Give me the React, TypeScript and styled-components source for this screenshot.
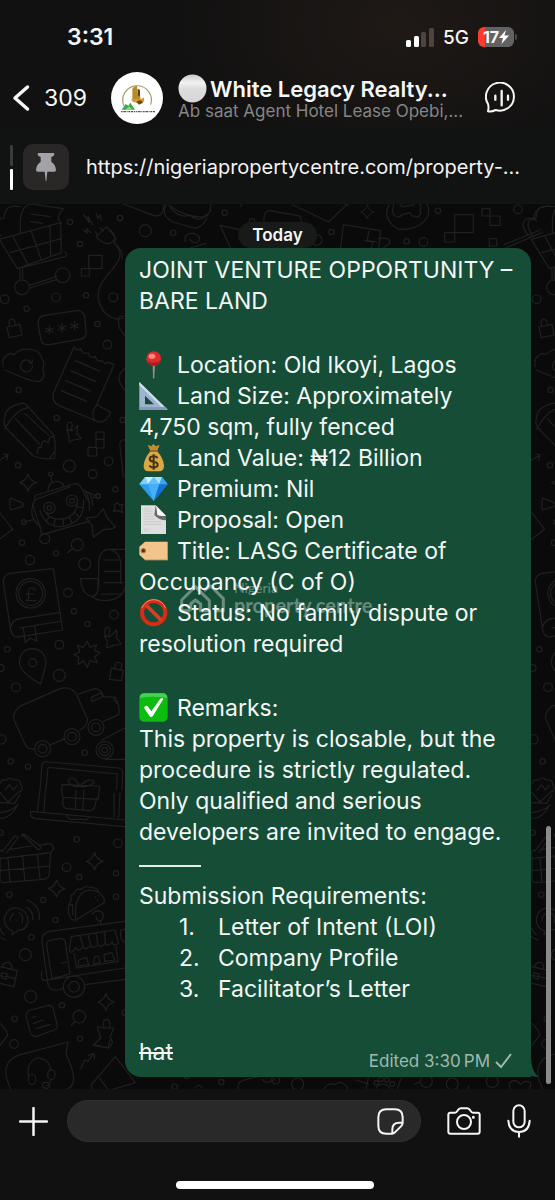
import React from "react";
import styled, { createGlobalStyle } from "styled-components";

const Global = createGlobalStyle`
  * { box-sizing: border-box; }
  html, body, #root { min-height: 100vh; }
  body { margin: 0; background: #0a0a0a; color: #f4f6f5; font-family: Inter, "Liberation Sans", sans-serif; }
  button { border: 0; padding: 0; background: none; color: inherit; font: inherit; display: flex; flex: none; align-items: center; cursor: pointer; }
  svg { display: block; flex: none; }
`;

const Screen = styled.div`
  min-height: 100vh;
  display: flex;
  flex-direction: column;
`;

const Top = styled.header`
  background: radial-gradient(ellipse 230px 150px at 72% 20%, #1f1916, #111111);
`;

const StatusBar = styled.div`
  height: 72px;
  padding: 2px 41px 0 67px;
  display: flex;
  align-items: center;
  justify-content: space-between;
`;

const Clock = styled.time`
  font-size: 23px;
  font-weight: 600;
`;

const StatusIcons = styled.div`
  display: flex;
  align-items: center;
  gap: 9px;
  font-size: 19px;
  font-weight: 500;
`;

const Battery = styled.span`
  position: relative;
  width: 36px;
  height: 20px;
  border-radius: 6px;
  display: flex;
  align-items: center;
  justify-content: center;
  background: linear-gradient(90deg, #ff3b30 7px, #626262 7px);
  font-size: 16px;
  font-weight: 700;
  &::after {
    content: "";
    position: absolute;
    right: -3px;
    top: 7px;
    width: 2px;
    height: 6px;
    border-radius: 0 2px 2px 0;
    background: #4a4a4a;
  }
`;

const ChatHeader = styled.div`
  height: 57px;
  padding: 0 38px 6px 12px;
  display: flex;
  align-items: center;
`;

const BackButton = styled.button`
  gap: 14px;
  width: 99px;
  font-size: 23px;
`;

const Names = styled.div`
  flex: 1;
  min-width: 0;
  margin: 0 20px 0 15px;
`;

const Title = styled.h1`
  margin: 0;
  height: 26px;
  display: flex;
  align-items: center;
  gap: 3px;
  font-size: 22px;
  line-height: 26px;
  font-weight: 600;
  white-space: nowrap;
`;

const Subtitle = styled.p`
  margin: 0;
  font-size: 17px;
  line-height: 18px;
  color: #858585;
  white-space: nowrap;
`;

const Pinned = styled.div`
  height: 75px;
  padding: 2px 20px 0 10px;
  display: flex;
  align-items: center;
  background: #111212;
  border-bottom: 1px solid #131313;
`;

const PinSteps = styled.div`
  display: grid;
  gap: 3px;
  margin-right: 10px;
`;

const PinStep = styled.span<{ $on?: boolean }>`
  width: 3px;
  height: 21px;
  border-radius: 1px;
  background: ${(p) => (p.$on ? "#ffffff" : "#3a3c3c")};
`;

const PinTile = styled.span`
  flex: none;
  width: 46px;
  height: 46px;
  border-radius: 10px;
  background: #292827;
  display: grid;
  place-items: center;
  margin-right: 17px;
`;

const PinLink = styled.a`
  min-width: 0;
  color: #f4f4f4;
  text-decoration: none;
  font-size: 20px;
  line-height: 28px;
  white-space: nowrap;
`;

const Chat = styled.main`
  position: relative;
  flex: 1;
  overflow: hidden;
  padding: 18px 24px 12px 125px;
  background: #0a0a0a;
`;

const Wallpaper = styled.svg`
  position: absolute;
  inset: 0;
  width: 100%;
  height: 100%;
`;

const DayRow = styled.div`
  position: relative;
  display: flex;
  justify-content: center;
  margin-left: -101px;
`;

const Day = styled.span`
  padding: 0 14px;
  border-radius: 13px;
  background: #171a19;
  font-size: 17px;
  line-height: 26px;
  font-weight: 600;
`;

const Bubble = styled.article`
  position: relative;
  padding: 7px 13px 6px 14px;
  border-radius: 16px 16px 0 16px;
  background: #154d37;
  font-size: 23px;
  line-height: 31px;
`;

const Tail = styled.svg`
  position: absolute;
  right: -8px;
  bottom: 0;
`;

const Block = styled.div<{ $gap?: number }>`
  margin-bottom: ${(p) => p.$gap ?? 33}px;
`;

const Line = styled.p`
  margin: 0;
`;

const Emoji = styled.svg`
  display: inline-block;
  width: 29px;
  height: 29px;
  margin: -2px 9px 0 0;
  vertical-align: -6px;
`;

const Rule = styled.hr`
  width: 62px;
  height: 33px;
  margin: 0;
  border: 0;
  background: linear-gradient(#e6ece9, #e6ece9) 0 17px / 100% 2px no-repeat;
`;

const Steps = styled.ol`
  list-style: none;
  margin: 0;
  padding: 0 0 0 40px;
`;

const Step = styled.li`
  display: grid;
  grid-template-columns: 39px 1fr;
`;

const LastRow = styled.div`
  min-height: 34px;
  display: flex;
  justify-content: space-between;
`;

const Meta = styled.span`
  align-self: flex-end;
  display: flex;
  align-items: center;
  gap: 5px;
  margin-right: 6px;
  font-size: 17px;
  line-height: 20px;
  color: #a1b8af;
`;

const Watermark = styled.div`
  position: absolute;
  left: 55px;
  top: 332px;
  display: flex;
  align-items: flex-end;
  gap: 9px;
  opacity: 0.36;
  font-family: Lato, sans-serif;
  font-size: 20px;
  font-weight: 700;
  line-height: 18px;
`;

const WatermarkSmall = styled.span`
  display: block;
  font-size: 14px;
  font-weight: 400;
  line-height: 16px;
`;

const Scrollbar = styled.span`
  position: absolute;
  right: 4px;
  bottom: 5px;
  width: 5px;
  height: 258px;
  border-radius: 3px;
  background: #8b8b8b;
`;

const Composer = styled.footer`
  padding: 11px 24px 11px 19px;
  background: #111111;
`;

const ComposerRow = styled.div`
  display: flex;
  align-items: center;
`;

const Field = styled.div`
  flex: 1;
  min-width: 0;
  height: 42px;
  margin: 0 26px 0 19px;
  padding: 0 16px;
  display: flex;
  align-items: center;
  border-radius: 22px;
  border: 1px solid #303030;
  background: #292929;
`;

const TextInput = styled.input`
  flex: 1;
  min-width: 0;
  height: 100%;
  border: 0;
  outline: 0;
  background: none;
  color: inherit;
  font: inherit;
  font-size: 21px;
`;

const MicButton = styled.button`
  margin-left: 26px;
`;

const HomeBar = styled.div`
  width: 198px;
  height: 8px;
  margin: 39px auto 0;
  border-radius: 4px;
  background: #ffffff;
`;

const outline = { fill: "none", stroke: "#f5f5f5", strokeLinecap: "round", strokeLinejoin: "round" } as const;

const Circles = ({ at }: { at: number[][] }) => (
  <>
    {at.map(([x, y, r], i) => (
      <circle key={i} cx={x} cy={y} r={r} />
    ))}
  </>
);

const lock = "M20 381L60 373L66 405L28 413ZM28 378C22 350 44 350 46 375";
const sparkle = "M0-26Q4-6 25 0Q4 6 0 26Q-6 6-25 0Q-6-6 0-26Z";

const Doodles = () => (
  <Wallpaper aria-hidden="true">
    <g id="doodles" fill="none" stroke="#202020" strokeWidth="3.6" strokeLinejoin="round" strokeLinecap="round">
      <g transform="translate(0 -4) scale(.33333)">
        <path d="M-2 118L182 68L184 158L52 206ZM-2 118L52 206L196 170Q206 160 194 156M30 158L184 116M38 108L84 194M94 94L124 180M150 78L152 166M60 208V240M68 206V240M88 256L170 230M90 264L172 238M2 108Q-30 60 12 54Q14 10 60 20M62 100Q54 14 96 12L190 26Q164 54 184 70M92 42L150 50M92 64L128 70" />
        <path d="M288 110L320 80L346 114Q326 150 288 110ZM286 96L294 106M300 84L310 92M344 130C400 190 290 220 294 290C300 340 340 366 370 354M252 44L268 68L264 50L278 74M288 40L294 56L300 44L304 60M250 90L262 100L260 86L272 98" />
        <path d={lock} />
        <path d="M266 166H306V206H266ZM244 206H268V228H244ZM288 696H312V744H288ZM288 718H312M264 742H290V768H264Z" />
        <path d="M134 346L230 332Q250 330 254 350L258 396Q258 416 238 418L148 434Q126 436 122 416L114 370Q114 348 134 346ZM148 376V402M136 384L160 396M136 396L160 384M186 370V396M174 378L198 390M174 390L198 378M224 364V390M212 372L236 384M212 384L236 372" />
        <path d="M10 500C0 470 30 456 42 464C60 440 120 440 126 478Q136 484 128 506Q140 534 118 544Q100 548 14 510M92 484A18 18 0 1 0 98 498M98 480L96 490L86 486" />
        <path d="M222 440L160 580Q154 604 176 616L296 666Q320 668 332 636L290 614L342 494L324 486Q318 498 306 482Q292 488 286 470Q268 476 264 458Q248 466 242 446Q230 456 222 440ZM290 614Q270 640 284 662M226 482L300 514M212 512L286 544M198 542L272 574M184 572L260 604" />
        <path d="M14 652Q16 620 64 610Q76 608 84 620L160 704Q168 716 164 774Q140 782 100 768L18 684Q8 672 14 652ZM14 688Q44 630 86 622M46 656L118 732M74 640L146 706M112 762Q112 738 124 742Q124 712 146 728Q146 704 160 712M150 774L164 754" />
        <path d="M200 690L218 692L234 676L230 700L244 716L220 720L208 726L206 706ZM204 690Q196 668 212 666Q222 672 212 690M-4 782L22 766M10 762L24 764L20 780" />
        <path d={sparkle} transform="translate(84 848)" />
        <path d="M104 900Q100 884 120 882L220 852Q236 848 244 864L262 900M144 874Q144 846 170 844Q190 846 192 860M152 828L156 846M262 876L290 888M370 350Q350 340 358 384L374 406M374 506Q340 530 374 570M374 720Q356 718 360 740L370 830" />
        <Circles at={[[66, 262, 22], [188, 226, 22], [210, 66, 8], [240, 132, 8], [360, 54, 8], [168, 292, 13], [258, 286, 8], [340, 292, 13], [14, 298, 13], [80, 326, 8], [292, 372, 8], [322, 434, 13], [56, 570, 8], [170, 654, 8], [368, 660, 8], [326, 784, 13], [278, 822, 13], [208, 798, 18], [54, 796, 8], [346, 868, 8], [152, 822, 6], [294, 888, 7]]} />
      </g>
      <g transform="translate(0 286) scale(.33333)">
        <path d="M32 24L66 38Q74 44 66 50L32 60Q26 44 32 24ZM-2 66L38 118L-2 148M98 40L126 134L268 94M104 30L210-10M252 0Q270 20 268 60M260 4Q276 10 278 46M278 22H290M72 96L104 88M104 30Q80 80 122 110M120 62Q140 120 196 108Q256 92 250 30M138 68Q150 92 196 86Q230 74 232 40M140 92L148 80M162 104L166 86M190 108V88M216 100L208 82M238 82L224 68M250 54L234 50" />
        <path d="M310 56L322 84L346 110Q340 120 312 118L280 142L276 106L258 84L290 80ZM342 46L352 38L360 46L370 42L364 54L368 68L354 62L340 64L346 54Z" />
        <path d="M202 188L218 176M296 290V216Q300 176 332 178H380M332 178Q362 190 362 220V280M242 266H294V300Q290 318 276 320Q244 310 242 266M276 320Q300 338 340 328Q370 320 376 290M312 210H362M312 244H362M312 278H370M304 312H366" />
        <path d="M160 236L28 250Q10 256 10 276L32 420Q38 446 60 440L188 420L160 236M32 412Q36 390 60 386L178 368M58 414L180 394M70 414L76 458L90 444L110 454L104 408M106 300Q96 288 86 298V326Q82 330 78 332H108M78 312H102" />
        <path d="M122 582Q58 546 58 516Q62 476 98 476Q138 480 138 522ZM262 454L270 472L290 464L284 482L300 488L284 500L292 518L270 512L262 532L250 512L234 524L236 502L222 494L240 486L232 466L250 472ZM312 438L330 440L350 420L350 444L364 462L340 466L320 474L322 452ZM316 436Q310 410 326 412Q332 420 326 436M334 534L370 542L364 572L328 568ZM342 534Q350 506 366 524L362 540" />
        <path d="M104 776Q80 780 74 760L42 690Q36 668 58 650L180 596Q210 588 228 610L262 686Q264 708 240 720M152 764L196 746M236 612L284 596Q306 598 310 620L346 622Q362 654 356 674L310 694M274 622L300 610Q316 618 300 624L276 634ZM340 626L350 640M306 750L390 706M316 808H380" />
        <path d="M120 900L126 824Q130 812 146 816L356 834Q368 836 368 850L366 900M138 900L144 832L352 852L350 900M240 890Q206 890 206 872Q216 850 240 888Q270 860 282 874Q280 890 240 890M186 900V884L298 888V900M2 880Q0 868 20 870Q28 858 42 870Q62 866 62 884Q72 896 60 906M16 900L28 884L40 900L52 886" />
        <Circles at={[[148, 54, 17], [148, 54, 7], [216, 32, 17], [216, 32, 7], [294, 18, 7], [72, 96, 7], [134, 146, 15], [66, 158, 8], [168, 190, 8], [232, 164, 18], [90, 210, 14], [254, 222, 18], [204, 308, 13], [222, 364, 8], [342, 374, 13], [262, 402, 8], [92, 310, 44], [92, 310, 36], [22, 478, 8], [178, 464, 13], [98, 518, 12], [2, 534, 10], [178, 556, 18], [48, 592, 13], [4, 748, 14], [128, 776, 24], [128, 776, 13], [216, 740, 24], [216, 740, 13], [288, 712, 24], [288, 712, 13], [314, 780, 26], [314, 780, 17], [314, 780, 8], [254, 788, 8], [32, 814, 8], [84, 830, 8]]} />
      </g>
      <g transform="translate(0 586) scale(.33333)">
        <path d="M120 0L112 62M136 0L132 64M342 10V80M360 8L356 82M92 64L376 90M92 64Q88 82 106 86L374 110M200 76Q204 88 216 88H250Q262 92 266 82M190 24L188 40Q190 56 204 56L268 62Q284 60 286 44L290 26M184 0L188 22L294 28L298 0M228 0L226 58M252 0L248 60M0 8L24 36L58 4M0 38L44 40L60 14M52 46Q30 90-2 84M0 68Q36 64 54 44" />
        <path d="M0 206L152 188L148 254Q142 268 128 268L10 278Q-2 278 0 250ZM0 206Q-8 180 8 180M6 186L42 140Q50 134 54 144L20 188M30 178L96 168M66 132L116 180Q124 176 120 168L76 134Q66 130 66 140M120 166L148 160Q162 166 160 178L152 188M24 204L30 276M68 198L74 270M112 194L120 266M0 242L150 228" />
        <path d={sparkle} transform="translate(284 214)" />
        <path d={sparkle} transform="translate(170 296)" />
        <path d={sparkle} transform="translate(318 636)" />
        <path d="M228 390Q212 394 206 370Q202 340 214 332Q208 314 224 310Q226 294 244 298Q254 286 266 292Q290 290 298 308Q318 326 312 338ZM228 390Q220 330 250 306Q270 294 298 308M208 346L218 344V374M286 320L287 322M296 316L297 318M292 330L293 332M276 372Q290 356 308 368Q314 384 302 392Q290 394 288 380M302 392V404" />
        <path d="M36 434L38 424Q8 410 14 382Q22 352 52 354Q86 362 84 396Q78 422 56 420ZM30 392Q30 378 42 370M56 368Q74 378 66 398M48 390L50 391M80 352Q102 366 98 390M80 330Q122 346 118 388M-2 440Q6 446 18 450M0 414Q2 426 14 434" />
        <path d="M374 394L148 424Q122 432 126 458L144 584Q148 602 170 600L190 596M256 584L374 568M130 572L374 534M126 544Q118 570 134 570M140 466Q138 452 154 450L180 446Q194 444 196 458L210 552L156 566ZM184 520L200 516M214 440L344 420L356 458Q342 472 336 456Q322 474 316 460Q300 476 294 464Q278 480 272 466Q256 484 250 470Q234 490 228 472Q210 498 208 478ZM240 438L250 470M264 434L272 466M288 430L294 464M314 426L316 460M222 490L230 534L354 514L348 470M236 510L260 502L266 524L234 528ZM284 500L296 498L300 518L280 522ZM312 494L336 488L344 510L314 514ZM374 418L362 420Q358 450 374 456" />
        <path d="M0 530L52 542L42 590L0 580M6 530Q14 514 28 518Q38 524 34 536M0 556L48 566M6 548L22 552L18 568L4 564ZM92 660L146 646Q158 646 160 658L172 706Q172 716 162 720L108 740Q96 740 92 730L78 680Q78 664 92 660ZM98 682L106 680M100 700L130 690M108 716L150 704M214 706L226 694M0 700Q30 730 20 740L0 766M292 710L310 714L342 714L330 740L338 756L328 774L280 766L302 744ZM312 712Q304 688 322 688Q334 694 328 714" />
        <path d="M32 896Q-6 820 54 796L204 756L198 792Q240 880 204 896M86 862Q76 820 110 804Q150 806 152 842M152 870Q150 886 138 888M242 836L254 810L264 814L280 792M264 796L282 790L284 806M346 800L406 878L324 902M346 800L274 884L278 900M300 866L326 902" />
        <ellipse cx="96" cy="868" rx="11" ry="16" />
        <ellipse cx="154" cy="854" rx="11" ry="15" />
        <ellipse cx="138" cy="886" rx="11" ry="9" />
        <Circles at={[[2, 128, 8], [230, 148, 8], [354, 160, 13], [200, 232, 13], [348, 250, 8], [238, 262, 8], [348, 320, 8], [28, 314, 8], [130, 330, 8], [166, 390, 8], [94, 442, 8], [76, 494, 18], [222, 590, 32], [222, 590, 16], [92, 620, 18], [186, 646, 8], [44, 686, 8], [238, 680, 19], [374, 668, 8], [42, 762, 13], [240, 746, 8]]} />
      </g>
      <g transform="translate(110 -4) scale(.33333)">
        <path d="M40 12L130 46Q160 56 162 12M170 12Q150 50 190 66L250 84Q276 86 290 54M176 16Q240 60 292 48M182 24Q210 56 240 46Q270 70 288 44M302 12Q304 40 288 46M226 124Q220 98 250 100Q280 110 262 128Q244 130 240 116M240 144L288 130M330 76L386 88M330 76L362 144M462 64Q460 30 480 32L560 46Q576 48 574 66M548 14L656 66L712 12M700 10L716 18M392 20L396 10M700 74L812 92L806 144M700 74L692 144M776 94L772 122L800 126M764 122L788 126L784 146M806 116Q840 110 840 130L820 144" />
        <path d={sparkle} transform="translate(772 36) scale(.8)" />
        <path d="M838 14C814 50 850 90 880 88C930 88 972 50 950 12M850 22C840 46 866 60 876 44L900 38C912 60 940 50 930 30C940 14 920 0 908 16L876 20C870 4 846 4 850 22ZM1034 44H1090V98H1034ZM1004 98H1034V126H1004ZM1116 26H1140V48H1116ZM1140 48H1170V76H1140ZM1138 116H1160V138H1138ZM1182 134L1290 90M1186 144L1296 98M1258 110Q1230 80 1244 60Q1260 48 1280 62M1270 60Q1276 10 1334 20M0 90Q24 110 12 130Q40 150 36 176" />
        <Circles at={[[30, 54, 8], [106, 92, 18], [190, 98, 8], [344, 38, 8], [426, 64, 8], [664, 96, 8], [984, 32, 8], [890, 124, 8], [940, 126, 13], [1224, 28, 13], [620, 120, 16]]} />
      </g>
      <g transform="translate(0 836) scale(.33333)">
        <path d="M278 14L324 24L330 0M584 144Q596 128 606 144M714 146Q710 124 740 118L830 96M786 118Q800 136 824 118" />
        <Circles at={[[524, 140, 8], [664, 126, 8], [560, 108, 8]]} />
      </g>
      <g transform="translate(275 826) scale(.33333)">
        <path d="M146 178Q160 156 180 164Q196 150 210 164Q222 172 212 180M242 150L280 162M280 144L272 178M378 146L366 178M418 162L436 156M302 178Q310 158 334 164Q346 170 344 178M706 178Q696 154 718 152Q732 154 736 164Q750 148 766 158Q770 170 762 178M576 178L582 168" />
        <Circles at={[[68, 162, 18], [2, 150, 12], [304, 158, 7], [318, 148, 7], [336, 150, 7], [352, 162, 7], [454, 154, 18], [532, 162, 18], [652, 154, 18]]} />
      </g>
    </g>
    <use href="#doodles" x="532" />
    <use href="#doodles" x="1064" />
  </Wallpaper>
);

const PushpinEmoji = () => (
  <Emoji viewBox="0 0 87 87" aria-label="Pin" role="img">
    <path d="M41 44H48L46 84L44 87L42 84Z" fill="#9a8e86" />
    <circle cx="44" cy="26" r="22" fill="#dd2c2b" />
    <path d="M24 32Q30 48 46 47Q62 44 65 30Q50 46 24 32Z" fill="#b3191c" />
    <ellipse cx="39" cy="19" rx="10" ry="8" fill="#ff8a80" />
  </Emoji>
);
const RulerEmoji = () => (
  <Emoji viewBox="0 0 87 87" aria-label="Set square" role="img">
    <path fillRule="evenodd" d="M1 3L86 86H1ZM18 44V70H45Z" fill="#9fb3cf" />
    <path d="M1 3L86 86H76L1 13Z" fill="#cbdcee" />
    <path d="M1 78H80L86 86H1Z" fill="#8599ba" />
  </Emoji>
);
const MoneyEmoji = () => (
  <Emoji viewBox="0 0 87 87" aria-label="Money bag" role="img">
    <path d="M27 7L37 10L43 4L50 10L61 7L54 24Q74 46 75 68Q76 84 60 85H28Q13 84 14 68Q16 44 35 24Z" fill="#dba944" />
    <path d="M27 7L37 10L43 4L50 10L61 7L54 22H35Z" fill="#c08a2f" />
    <path d="M33 24H56" stroke="#8b572a" strokeWidth="5" strokeLinecap="round" />
    <path d="M56 45Q50 39 43 40Q32 41 32 48Q33 55 45 57Q57 59 56 67Q54 74 44 74Q36 74 31 68M44 34V80" fill="none" stroke="#463313" strokeWidth="6" />
  </Emoji>
);
const GemEmoji = () => (
  <Emoji viewBox="0 0 87 87" aria-label="Gem" role="img">
    <path d="M18 9H69L86 31L44 81L1 31Z" fill="#2b9df0" />
    <path d="M18 9L27 31H1Z" fill="#7fd0fa" />
    <path d="M18 9H44L27 31Z" fill="#c7efff" />
    <path d="M44 9L61 31H27Z" fill="#5fc1fb" />
    <path d="M44 9H69L61 31Z" fill="#a7e2fd" />
    <path d="M69 9L86 31H61Z" fill="#3aa7ef" />
    <path d="M27 31H61L44 81Z" fill="#47b1f7" />
    <path d="M61 31H86L44 81Z" fill="#1572cf" />
  </Emoji>
);
const PageEmoji = () => (
  <Emoji viewBox="0 0 87 87" aria-label="Page" role="img">
    <path d="M6 1H50L81 32V87H6Z" fill="#dedede" />
    <path d="M50 1L81 32V46Q60 46 46 30Z" fill="#6a6a6a" />
    <path d="M50 1L81 32Q66 34 55 30Q54 14 50 1Z" fill="#fafafa" />
    <path d="M14 12H34M14 18H42M14 26H40M14 34H44M14 42H48M14 50H70M14 58H68M14 72H30M14 78H26" stroke="#c4c4c4" strokeWidth="2" />
  </Emoji>
);
const TagEmoji = () => (
  <Emoji viewBox="0 0 87 87" aria-label="Label" role="img">
    <path d="M18 17H86V72H18L1 56V32Z" fill="#f3c58d" />
    <path d="M18 70H86V73H18Z" fill="#cf9e64" />
    <circle cx="13" cy="44" r="8" fill="#b9783f" />
    <circle cx="13" cy="44" r="5" fill="#43342a" />
  </Emoji>
);
const ProhibitedEmoji = () => (
  <Emoji viewBox="0 0 87 87" aria-label="Prohibited" role="img">
    <circle cx="44" cy="44" r="35" fill="none" stroke="#d92b12" strokeWidth="12" />
    <path d="M20 20L68 68" stroke="#e03a20" strokeWidth="11" />
    <path d="M8 31Q20 5 45 5Q70 6 80 31" fill="none" stroke="#ff8a6c" strokeWidth="3" />
  </Emoji>
);
const CheckEmoji = () => (
  <Emoji viewBox="0 0 87 87" aria-label="Done" role="img">
    <rect x="1" y="1" width="85" height="85" rx="14" fill="#0cbc10" />
    <path d="M2 15Q3 1 15 1H72Q84 1 85 15Q44 8 2 15Z" fill="#43d24b" />
    <path d="M15 44Q20 35 26 40L37 55L64 17Q70 12 73 18L42 68Q36 76 31 68Z" fill="#ffffff" />
  </Emoji>
);

const details = [
  { icon: <PushpinEmoji />, text: "Location: Old Ikoyi, Lagos" },
  { icon: <RulerEmoji />, text: "Land Size: Approximately 4,750 sqm, fully fenced" },
  { icon: <MoneyEmoji />, text: "Land Value: ₦12 Billion" },
  { icon: <GemEmoji />, text: "Premium: Nil" },
  { icon: <PageEmoji />, text: "Proposal: Open" },
  { icon: <TagEmoji />, text: "Title: LASG Certificate of Occupancy (C of O)" },
  { icon: <ProhibitedEmoji />, text: "Status: No family dispute or resolution required" },
];
const requirements = ["Letter of Intent (LOI)", "Company Profile", "Facilitator’s Letter"];

export default function App() {
  return (
    <Screen>
      <Global />
      <Top>
        <StatusBar>
          <Clock>3:31</Clock>
          <StatusIcons>
            <svg width="28" height="19" viewBox="0 0 28 19" fill="#fff" aria-label="Signal">
              <rect x="0" y="12" width="5" height="7" rx="1.5" />
              <rect x="8" y="8" width="5" height="11" rx="1.5" />
              <rect x="15" y="4" width="5" height="15" rx="1.5" fill="#4b4441" />
              <rect x="23" y="0" width="5" height="19" rx="1.5" fill="#4b4441" />
            </svg>
            <span>5G</span>
            <Battery>
              17
              <svg width="10" height="14" viewBox="0 0 10 14" fill="#fff" aria-label="Charging">
                <path d="M7 0L0 8H4L2.500 14L10 5.500H5.500Z" />
              </svg>
            </Battery>
          </StatusIcons>
        </StatusBar>
        <ChatHeader>
          <BackButton aria-label="Back, 309 unread chats">
            <svg width="18" height="28" viewBox="0 0 18 28" {...outline} strokeWidth="3.500">
              <path d="M15.500 3L3 14L15.500 25" />
            </svg>
            <span>309</span>
          </BackButton>
          <svg width="52" height="52" viewBox="0 0 156 156" role="img" aria-label="White Legacy Realty logo">
            <circle cx="78" cy="78" r="78" fill="#fff" />
            <path d="M39 102A43 43 0 1 1 119 98" fill="none" stroke="#a99b69" strokeWidth="3.500" />
            <path d="M68 46L78 41L80 68L88 74L88 82H64V50Z" fill="#b98a2c" />
            <path d="M80 50L87 54V74L80 70Z" fill="#5b4317" />
            <path d="M60 82L80 80Q92 84 98 76L100 88L90 94L66 90Z" fill="#d39a2c" />
            <path d="M76 90Q90 78 96 92L84 98Z" fill="#6b4818" />
            <path d="M32 113L44 96L52 101L58 92L72 113Z" fill="#3fa94b" />
            <path d="M44 113L54 103L64 113Z" fill="#8bdc73" />
            <path d="M30 119H132" stroke="#555" strokeWidth="4" strokeDasharray="5 2 8 2 3 2" />
          </svg>
          <Names>
            <Title>
              <svg width="29" height="29" viewBox="0 0 29 29" role="img" aria-label="White circle">
                <defs>
                  <linearGradient id="ball" x1="0" y1="0" x2="0" y2="1">
                    <stop offset="0" stopColor="#c9c9c9" />
                    <stop offset=".3" stopColor="#f2f2f2" />
                    <stop offset=".5" stopColor="#dddddd" />
                    <stop offset="1" stopColor="#d6d6d6" />
                  </linearGradient>
                </defs>
                <circle cx="14.500" cy="14.500" r="14" fill="url(#ball)" />
              </svg>
              White Legacy Realty...
            </Title>
            <Subtitle>Ab saat Agent Hotel Lease Opebi,...</Subtitle>
          </Names>
          <button aria-label="Voice chat">
            <svg width="32" height="32" viewBox="0 0 96 96" {...outline} strokeWidth="6">
              <path d="M9 88Q12 76 9 66A42 42 0 1 1 32 84Q20 90 9 88Z" />
              <path d="M31 41V53M50 27V70M69 41V53" strokeWidth="7" />
            </svg>
          </button>
        </ChatHeader>
      </Top>
      <Pinned>
        <PinSteps>
          <PinStep />
          <PinStep $on />
        </PinSteps>
        <PinTile>
          <svg width="20" height="28" viewBox="0 0 60 84" fill="#a3a2a8" role="img" aria-label="Pinned message">
            <path d="M8 0H52Q56 0 55 5Q54 9 46 12V27Q58 34 60 50Q60 56 55 56H34L31 84H29L26 56H5Q0 56 0 50Q2 34 14 27V12Q6 9 5 5Q4 0 8 0Z" />
          </svg>
        </PinTile>
        <PinLink href="#pinned">https://nigeriapropertycentre.com/property-...</PinLink>
      </Pinned>
      <Chat>
        <Doodles />
        <DayRow>
          <Day>Today</Day>
        </DayRow>
        <Bubble>
          <Tail width="24" height="22" viewBox="0 0 24 22" aria-hidden="true">
            <path d="M16 0Q16 17 24 22Q16 22 11 18Q7 22 0 22V0Z" fill="#154d37" />
          </Tail>
          <Block>
            <Line>JOINT VENTURE OPPORTUNITY – BARE LAND</Line>
          </Block>
          <Block>
            {details.map((d) => (
              <Line key={d.text}>
                {d.icon}
                {d.text}
              </Line>
            ))}
          </Block>
          <Block $gap={32}>
            <Line>
              <CheckEmoji />
              Remarks:
            </Line>
            <Line>
              This property is closable, but the procedure is strictly regulated. Only qualified and serious developers
              are invited to engage.
            </Line>
            <Rule />
            <Line>Submission Requirements:</Line>
            <Steps>
              {requirements.map((r, i) => (
                <Step key={r}>
                  <span>{i + 1}.</span>
                  <span>{r}</span>
                </Step>
              ))}
            </Steps>
          </Block>
          <LastRow>
            <s>hat</s>
            <Meta>
              Edited 3:30{"\u2009"}PM
              <svg width="17" height="16" viewBox="0 0 17 16" fill="none" stroke="#a1b8af" strokeWidth="2" role="img" aria-label="Sent">
                <path d="M1 9L6 14L16 1" />
              </svg>
            </Meta>
          </LastRow>
          <Watermark>
            <svg width="45" height="30" viewBox="0 0 135 90" fill="none" stroke="#fff" strokeWidth="9" strokeLinejoin="round">
              <path d="M30 80H5V48L46 8L88 50V80H62V60L46 48L32 60V80" />
              <path d="M52 14L64 6M72 20L92 6L130 44V80H104" />
            </svg>
            <div>
              <WatermarkSmall>Nigeria</WatermarkSmall>
              property centre
            </div>
          </Watermark>
        </Bubble>
        <Scrollbar />
      </Chat>
      <Composer>
        <ComposerRow>
          <button aria-label="Attach">
            <svg width="29" height="29" viewBox="0 0 29 29" {...outline} strokeWidth="2.500">
              <path d="M14.500 1V28M1 14.500H28" />
            </svg>
          </button>
          <Field>
            <TextInput aria-label="Message" />
            <button aria-label="Stickers">
              <svg width="27" height="27" viewBox="0 0 81 81" {...outline} strokeWidth="6">
                <path d="M46 77H28Q4 77 4 53V28Q4 4 28 4H53Q77 4 77 28V44Q77 50 72 55L56 71Q51 77 46 77V64Q46 44 66 44H77" />
              </svg>
            </button>
          </Field>
          <button aria-label="Camera">
            <svg width="34" height="28" viewBox="0 0 102 84" {...outline} strokeWidth="6">
              <path d="M10 17H24Q28 17 31 12L34 8Q37 4 42 4H60Q65 4 68 8L71 12Q74 17 78 17H92Q98 17 98 23V74Q98 80 92 80H10Q4 80 4 74V23Q4 17 10 17Z" />
              <circle cx="51" cy="45" r="21" />
              <circle cx="79" cy="31" r="2.500" fill="#fff" strokeWidth="4" />
            </svg>
          </button>
          <MicButton aria-label="Record voice message">
            <svg width="24" height="34" viewBox="0 0 72 102" {...outline} strokeWidth="6">
              <rect x="19" y="4" width="34" height="66" rx="17" />
              <path d="M4 50Q6 84 36 84Q66 84 68 50M36 84V98" />
            </svg>
          </MicButton>
        </ComposerRow>
        <HomeBar />
      </Composer>
    </Screen>
  );
}
